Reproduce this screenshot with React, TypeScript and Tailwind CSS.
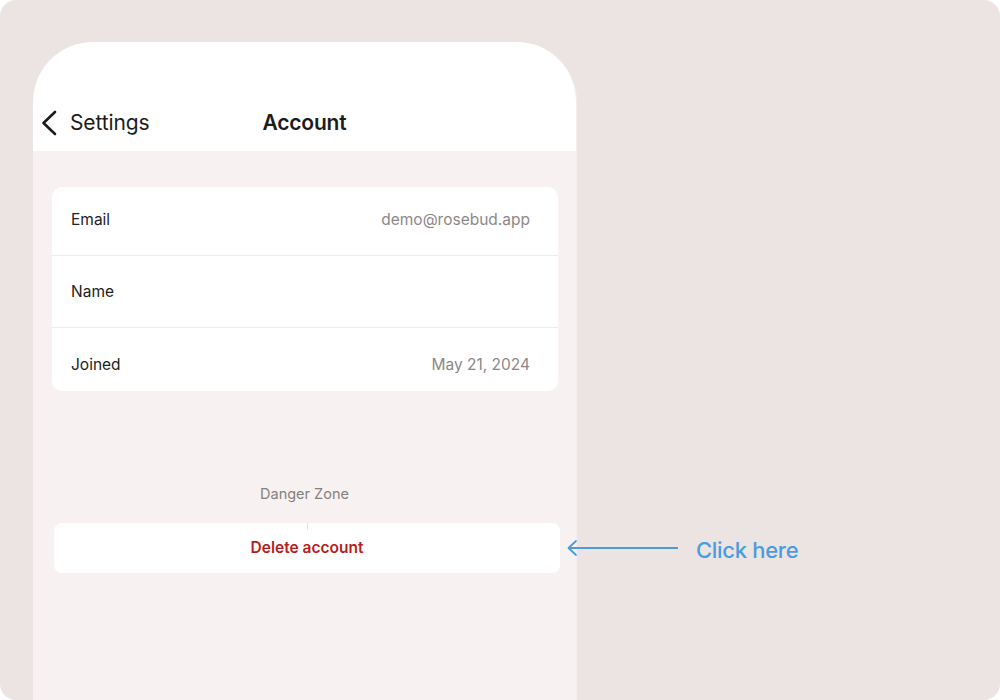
const rows = [
  { label: "Email", value: "demo@rosebud.app", cls: "h-[68px] pb-[2px]" },
  { label: "Name", value: "", cls: "h-[72px] border-t border-[#efebea]" },
  { label: "Joined", value: "May 21, 2024", cls: "h-[64px] pt-[10px] border-t border-[#efebea]" },
];

export default function App() {
  return (
    <div className="w-[1000px] h-[700px] bg-white">
      <div
        className="relative w-[1000px] h-[700px] rounded-[16px] bg-[#ece4e2] overflow-hidden flex"
        style={{ fontFamily: "Inter, 'Liberation Sans', sans-serif" }}
      >
        {/* Phone */}
        <div className="ml-[33px] mt-[42px] w-[544px] flex flex-col rounded-t-[60px] overflow-hidden border-r border-[#f3eeed]">
          {/* Header */}
          <div className="h-[109px] bg-white grid grid-cols-[1fr_auto_1fr] items-center pt-[52px] px-[6px]">
            <div className="flex items-center gap-[12px] text-[#1c1c1c]">
              <svg width="18" height="26" viewBox="0 0 18 26" fill="none" className="ml-[1px]">
                <path d="M15 2L3.5 13L15 24" stroke="#1c1c1c" strokeWidth="2.6" strokeLinecap="round" strokeLinejoin="round" />
              </svg>
              <span className="text-[21px] tracking-[-0.1px]">Settings</span>
            </div>
            <span className="text-[21px] font-semibold text-[#1c1c1c] tracking-[-0.2px]">Account</span>
            <div />
          </div>

          {/* Body */}
          <div className="flex-1 bg-[#f7f2f1] pt-[36px]">
            <div className="ml-[19px] mr-[18px] bg-white rounded-[10px] overflow-hidden">
              {rows.map((r) => (
                <div key={r.label} className={`flex items-center justify-between pl-[19px] pr-[28px] ${r.cls}`}>
                  <span className="text-[15.5px] text-[#222]">{r.label}</span>
                  <span className="text-[15.5px] text-[#8c8888]">{r.value}</span>
                </div>
              ))}
            </div>

            <p className="mt-[92px] text-center text-[14.5px] text-[#858080]">Danger Zone</p>

            <div className="relative mt-[18px] ml-[21px] mr-[16px] h-[50px] bg-white rounded-[8px] flex items-center justify-center">
              <div className="absolute top-0 left-[253px] w-px h-[7px] bg-[#e6e1e0]" />
              <span className="text-[15.5px] font-semibold text-[#b81c1c]">Delete account</span>
            </div>
          </div>
        </div>

        {/* Annotation */}
        <div className="absolute left-[566px] top-[534px] h-[28px] flex items-center gap-[16px] text-[#4a9be0]">
          <svg width="114" height="28" viewBox="0 0 114 28" fill="none">
            <path d="M2 14H112" stroke="#4a9be0" strokeWidth="1.8" />
            <path d="M10 7L2.5 14L10 21" stroke="#4a9be0" strokeWidth="1.8" strokeLinecap="round" strokeLinejoin="round" />
          </svg>
          <span className="text-[22px] leading-[28px] font-medium tracking-[-0.3px] translate-y-[2px]">Click here</span>
        </div>
      </div>
    </div>
  );
}
